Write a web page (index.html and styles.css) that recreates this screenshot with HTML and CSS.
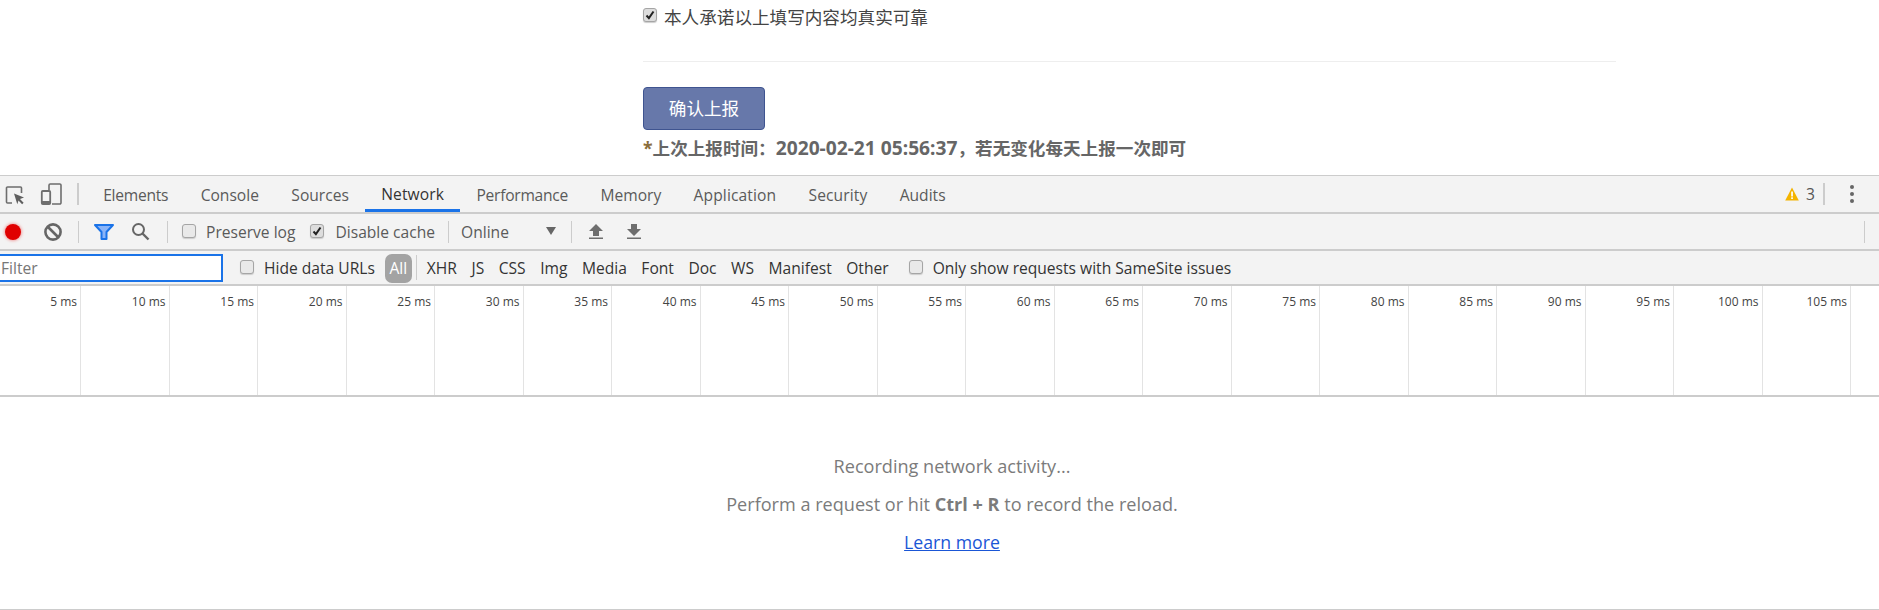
FILE: index.html
```html
<!DOCTYPE html>
<html>
<head lang="zh">
    <meta charset="UTF-8">
    <title>Network</title>
    <link rel="stylesheet" href="styles.css">
</head>
<body>
    <div class="page">
        <div class="agree">
            <span class="cb cb-page cb-on"><svg width="10" height="10" viewBox="0 0 10 10"><path d="M1.5 5.5l2.4 2.6L8.5 1.5" fill="none" stroke="#222" stroke-width="2"/></svg></span>
            <span>本人承诺以上填写内容均真实可靠</span>
        </div>
        <div class="rule"></div>
        <button class="submit">确认上报</button>
        <p class="last"><span class="star">*</span>上次上报时间：<span class="last-time">2020-02-21 05:56:37</span>，若无变化每天上报一次即可</p>
    </div>

    <div class="devtools">
        <div class="bar tabs">
            <svg class="ic-inspect" width="20" height="20" viewBox="0 0 20 20"><path d="M7 18H2.5a1 1 0 0 1-1-1V3a1 1 0 0 1 1-1h13a1 1 0 0 1 1 1v5" fill="none" stroke="#6e6e6e" stroke-width="1.6"/><path d="M9 8.5l10 4-4 1.6 3.6 3.6-1.5 1.5-3.6-3.6-1.2 3.6z" fill="#5f5f5f"/></svg>
            <svg class="ic-device" width="22" height="22" viewBox="0 0 22 22"><path d="M9 7V2.2a1.2 1.2 0 0 1 1.2-1.2h9.6A1.2 1.2 0 0 1 21 2.2v17.6a1.2 1.2 0 0 1-1.2 1.2H12" fill="none" stroke="#6e6e6e" stroke-width="1.6"/><rect x="1.8" y="8" width="8.4" height="13" rx="1" fill="none" stroke="#6e6e6e" stroke-width="1.8"/><rect x="1.8" y="18" width="8.4" height="3" fill="#6e6e6e"/></svg>
            <i class="sep sep-tall sep-tools"></i>
            <div class="tab-list">
                <span class="tab tab-tight">Elements</span>
                <span class="tab">Console</span>
                <span class="tab">Sources</span>
                <span class="tab tab-on tab-wide">Network</span>
                <span class="tab tab-tight">Performance</span>
                <span class="tab">Memory</span>
                <span class="tab tab-wide">Application</span>
                <span class="tab tab-wide">Security</span>
                <span class="tab">Audits</span>
            </div>
            <div class="tab-right">
                <svg width="14" height="14" viewBox="0 0 14 14"><path d="M7 .5L13.8 13.5H.2z" fill="#f4b400"/><rect x="6.2" y="4.5" width="1.7" height="5" fill="#fff"/><rect x="6.2" y="10.3" width="1.7" height="1.7" fill="#fff"/></svg>
                <span class="warn-count">3</span>
                <i class="sep sep-tall sep-warn"></i>
                <svg class="ic-more" width="6" height="20" viewBox="0 0 6 20"><circle cx="3" cy="3" r="2" fill="#666"/><circle cx="3" cy="10" r="2" fill="#666"/><circle cx="3" cy="17" r="2" fill="#666"/></svg>
            </div>
        </div>

        <div class="bar tools">
            <span class="record"></span>
            <svg class="ic-block" width="18" height="18" viewBox="0 0 18 18"><circle cx="9" cy="9" r="7.6" fill="none" stroke="#666" stroke-width="2.6"/><path d="M4 4l10 10" stroke="#666" stroke-width="2.6"/></svg>
            <i class="sep sep-tall sep-a"></i>
            <svg class="ic-filter" width="20" height="16" viewBox="0 0 20 16"><path d="M1 1h18l-6.5 7v7h-5V8z" fill="#8ab4f8" stroke="#1a73e8" stroke-width="2" stroke-linejoin="round"/></svg>
            <svg class="ic-search" width="19" height="19" viewBox="0 0 19 19"><circle cx="7.5" cy="7.5" r="5.5" fill="none" stroke="#666" stroke-width="2"/><path d="M11.5 11.5l6 6" stroke="#666" stroke-width="2.4"/></svg>
            <i class="sep sep-tall sep-b"></i>
            <label class="check check-preserve"><span class="cb"></span>Preserve log</label>
            <label class="check check-cache"><span class="cb cb-on"><svg width="10" height="10" viewBox="0 0 10 10"><path d="M1.5 5.5l2.4 2.6L8.5 1.5" fill="none" stroke="#222" stroke-width="2"/></svg></span>Disable cache</label>
            <i class="sep sep-tall sep-c"></i>
            <span class="throttle">Online</span>
            <svg class="ic-caret" width="10" height="8" viewBox="0 0 10 8"><path d="M0 0h10L5 8z" fill="#666"/></svg>
            <i class="sep sep-tall sep-d"></i>
            <svg class="ic-up" width="14" height="15" viewBox="0 0 14 15"><path d="M7 0l7 7H10v5H4V7H0zM0 13.5h14V15H0z" fill="#6e6e6e"/></svg>
            <svg class="ic-down" width="14" height="15" viewBox="0 0 14 15"><path d="M4 0h6v5h4l-7 7-7-7h4zM0 13.5h14V15H0z" fill="#6e6e6e"/></svg>
            <i class="sep sep-tall sep-end"></i>
        </div>

        <div class="bar filters">
            <div class="filter-box">Filter</div>
            <label class="check check-hide"><span class="cb"></span>Hide data URLs</label>
            <span class="pill">All</span>
            <i class="sep sep-short"></i>
            <div class="types">
                <span>XHR</span>
                <span>JS</span>
                <span>CSS</span>
                <span>Img</span>
                <span>Media</span>
                <span>Font</span>
                <span>Doc</span>
                <span>WS</span>
                <span>Manifest</span>
                <span>Other</span>
            </div>
            <label class="check check-same"><span class="cb"></span>Only show requests with SameSite issues</label>
        </div>

        <div class="overview">
            <div class="tick"><span>5 ms</span></div>
            <div class="tick"><span>10 ms</span></div>
            <div class="tick"><span>15 ms</span></div>
            <div class="tick"><span>20 ms</span></div>
            <div class="tick"><span>25 ms</span></div>
            <div class="tick"><span>30 ms</span></div>
            <div class="tick"><span>35 ms</span></div>
            <div class="tick"><span>40 ms</span></div>
            <div class="tick"><span>45 ms</span></div>
            <div class="tick"><span>50 ms</span></div>
            <div class="tick"><span>55 ms</span></div>
            <div class="tick"><span>60 ms</span></div>
            <div class="tick"><span>65 ms</span></div>
            <div class="tick"><span>70 ms</span></div>
            <div class="tick"><span>75 ms</span></div>
            <div class="tick"><span>80 ms</span></div>
            <div class="tick"><span>85 ms</span></div>
            <div class="tick"><span>90 ms</span></div>
            <div class="tick"><span>95 ms</span></div>
            <div class="tick"><span>100 ms</span></div>
            <div class="tick"><span>105 ms</span></div>
        </div>

        <div class="empty">
            <p>Recording network activity...</p>
            <p>Perform a request or hit <b>Ctrl + R</b> to record the reload.</p>
            <p><a href="#">Learn more</a></p>
        </div>
    </div>
</body>
</html>
```

FILE: styles.css
```css
body{
    margin: 0;
    padding: 0;
    background-color: #fff;
    font-family: "Open Sans", "Noto Sans CJK SC", sans-serif;
    overflow: hidden;
}
.page{
    height: 175px;
    padding-left: 643px;
    box-sizing: border-box;
    font-family: "Noto Sans", "Noto Sans CJK SC", sans-serif;
    color: #555;
}
.agree{
    display: flex;
    align-items: center;
    height: 32px;
    font-size: 17.6px;
    color: #444;
}
.rule{
    width: 973px;
    height: 1px;
    margin-top: 29px;
    background-color: #eee;
}
.submit{
    display: block;
    width: 122px;
    height: 43px;
    margin-top: 25px;
    padding: 0 0 2px;
    border: 1px #3f5490 solid;
    border-radius: 4px;
    background-color: #6778aa;
    color: #fff;
    font-size: 17.6px;
    font-family: inherit;
}
.last{
    margin: 4px 0 0;
    height: 28px;
    line-height: 28px;
    font-size: 17.6px;
    font-weight: bold;
    color: #666;
    white-space: nowrap;
}
.last-time{
    font-size: 19.2px;
}
.star{
    color: #8a6d3b;
}

.devtools{
    border-top: 1px #ccc solid;
    height: 435px;
    box-sizing: border-box;
    border-bottom: 1px #ccc solid;
}
.bar{
    display: flex;
    align-items: center;
    box-sizing: border-box;
    background-color: #f3f3f3;
    border-bottom: 2px #ccc solid;
    font-size: 15.6px;
    color: #5a5a5a;
    white-space: nowrap;
}
.tabs{
    height: 38px;
    padding-left: 5px;
}
.tools{
    height: 37px;
    padding-left: 5px;
}
.filters{
    height: 35px;
    color: #333;
}
.sep{
    display: block;
    width: 1px;
    background-color: #ccc;
}
.sep-tall{
    height: 22px;
}
.sep-short{
    height: 25px;
    margin-left: 4px;
}

.ic-inspect{
    margin-top: 2px;
}
.ic-device{
    margin-left: 15px;
}
.sep-tools{
    width: 2px;
    margin-left: 15px;
}
.tab-list{
    display: flex;
    height: 100%;
    margin-left: 8px;
}
.tab{
    display: flex;
    align-items: center;
    height: 36px;
    box-sizing: border-box;
    padding: 1px 16.2px 0;
}
.tab-tight{
    letter-spacing: -.25px;
}
.tab-wide{
    letter-spacing: .1px;
}
.tab-on{
    color: #333;
    border-bottom: 3px #1a73e8 solid;
    padding-top: 3px;
}
.tab-right{
    display: flex;
    align-items: center;
    margin-left: auto;
    padding-right: 24px;
}
.warn-count{
    margin-left: 7px;
    color: #555;
}
.sep-warn{
    width: 2px;
    margin-left: 8px;
}
.ic-more{
    margin-left: 24px;
}

.record{
    display: block;
    width: 16px;
    height: 16px;
    border-radius: 50%;
    background-color: #e00000;
    box-shadow: 0 0 3px 1px #f0a0a0;
}
.ic-block{
    margin-left: 23px;
}
.sep-a{
    margin-left: 16px;
}
.ic-filter{
    margin-left: 15px;
}
.ic-search{
    margin-left: 17px;
}
.sep-b{
    margin-left: 17px;
}
.check{
    display: flex;
    align-items: center;
}
.cb{
    display: flex;
    align-items: center;
    justify-content: center;
    box-sizing: border-box;
    flex: none;
    width: 14px;
    height: 14px;
    margin-right: 10px;
    margin-top: -2px;
    border: 1px #a5a5a5 solid;
    border-radius: 3px;
    background-color: #e9e9e9;
    box-shadow: 0 1px 1px #ccc;
}
.cb-on{
    background-color: #ddd;
}
.cb-page{
    margin-right: 7px;
}
.check-preserve{
    margin-left: 14px;
}
.check-cache{
    margin-left: 15px;
}
.check-cache .cb{
    margin-right: 11px;
}
.sep-c{
    margin-left: 13px;
}
.throttle{
    margin-left: 12px;
    width: 85px;
}
.ic-caret{
    margin-bottom: 2px;
}
.sep-d{
    margin-left: 15px;
}
.ic-up{
    margin-left: 17px;
}
.ic-down{
    margin-left: 24px;
}
.sep-end{
    margin-left: auto;
    margin-right: 14px;
}

.filter-box{
    box-sizing: border-box;
    width: 223px;
    height: 28px;
    margin-top: 1px;
    line-height: 24px;
    padding-left: 1px;
    border: 2px #1a73e8 solid;
    border-left: 0;
    background-color: #fff;
    color: #777;
}
.check-hide{
    margin-left: 17px;
}
.pill{
    width: 27px;
    height: 29px;
    margin-top: 1px;
    line-height: 29px;
    margin-left: 10px;
    text-align: center;
    border-radius: 7px;
    background-color: #a3a3a3;
    color: #fff;
}
.types{
    display: flex;
    gap: 14.5px;
    margin-left: 10px;
}
.check-same{
    margin-left: 20px;
}
.check-same .cb{
    margin-right: 10px;
}

.overview{
    display: flex;
    height: 111px;
    box-sizing: border-box;
    border-bottom: 2px #ccc solid;
}
.tick{
    flex: none;
    box-sizing: border-box;
    width: 88.5px;
    padding: 7px 3px 0 0;
    border-right: 1px #e3e3e3 solid;
    text-align: right;
    font-size: 12px;
    color: #444;
}
.tick:first-child{
    width: 81px;
}

.empty{
    padding: 50px 0 0 25px;
    text-align: center;
    font-size: 18.1px;
    color: #7b7b7b;
}
.empty p{
    margin: 0;
    height: 38px;
    line-height: 38px;
}
.empty a{
    color: #1a56d6;
    font-size: 17.7px;
}
```
